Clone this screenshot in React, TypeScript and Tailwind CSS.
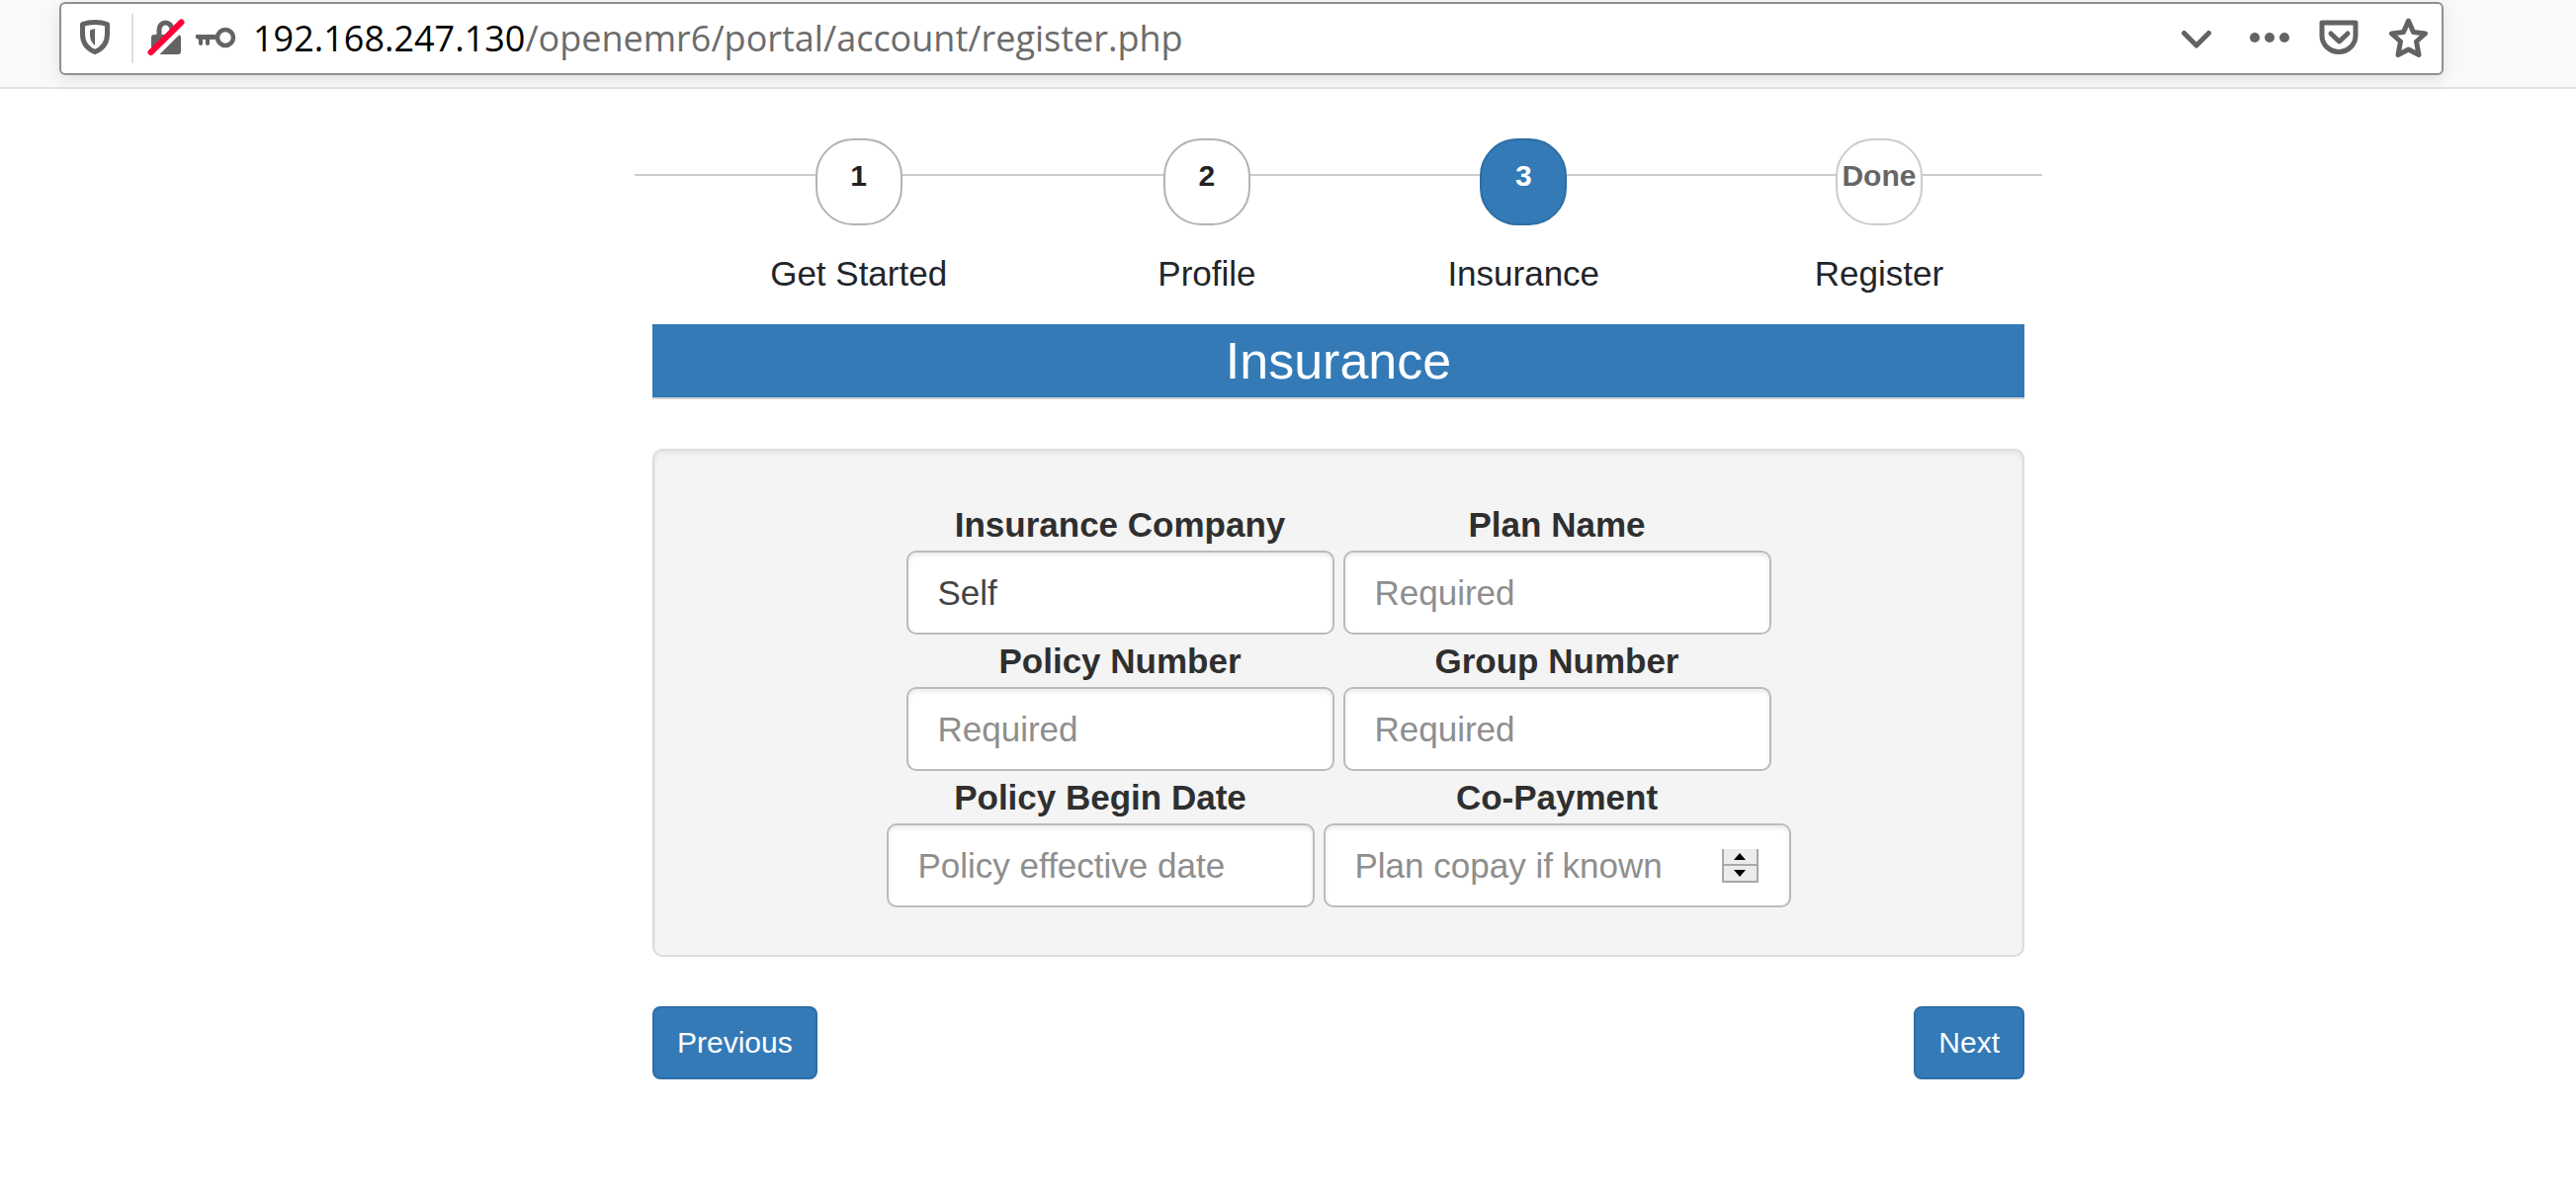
import React from "react";

type Step = { mark: string; title: string; state: "idle" | "active" | "disabled" };

const steps: Step[] = [
  { mark: "1", title: "Get Started", state: "idle" },
  { mark: "2", title: "Profile", state: "idle" },
  { mark: "3", title: "Insurance", state: "active" },
  { mark: "Done", title: "Register", state: "disabled" },
];

const stepStyles = {
  idle: "border-[#b3b3b3] bg-white text-[#222]",
  active: "border-[#2e6da4] bg-[#337ab7] text-white",
  disabled: "border-[#ccc] bg-white text-[#666]",
};

function AddressBar() {
  return (
    <header className="border-b-2 border-[#e1e1e2] bg-[#f9f9fa] pt-[2px] pr-[134px] pb-3 pl-[60px]">
      <div className="flex h-[74px] items-center rounded-md border-2 border-[#8f8f93] bg-white pr-[14px] pl-[17px] shadow-[0_4px_16px_rgba(0,0,0,0.1)]">
        <button aria-label="Tracking protection" className="shrink-0">
          <svg width="34" height="40" viewBox="0 0 34 40" fill="none">
            <path d="M17 3.500C12 3.500 8 4.200 4.500 5.500v10c0 9 4 14.500 12.500 18 8.500-3.500 12.500-9 12.500-18v-10C26 4.200 22 3.500 17 3.500z" stroke="#636363" strokeWidth="5" strokeLinejoin="round" />
            <path d="M17 10v17c-3-2.500-5-6-5-10.500v-5z" fill="#636363" />
          </svg>
        </button>
        <span className="mr-[14px] ml-5 h-[50px] w-[2px] shrink-0 bg-[#dedee0]" />
        <button aria-label="Connection is not secure" className="shrink-0">
          <svg width="38" height="42" viewBox="0 0 38 42" fill="none">
            <path d="M12 20v-8a6.500 7 0 0 1 13 0v8" stroke="#636363" strokeWidth="5" />
            <rect x="4" y="17" width="30" height="20" rx="3" fill="#636363" />
            <path d="M6 40L37 9" stroke="#fff" strokeWidth="5" />
            <path d="M3.500 35L34.500 4.500" stroke="#ff0039" strokeWidth="6" strokeLinecap="round" />
          </svg>
        </button>
        <button aria-label="Saved login" className="ml-[11px] shrink-0">
          <svg width="42" height="26" viewBox="0 0 42 26" fill="none">
            <circle cx="30" cy="12" r="8" stroke="#636363" strokeWidth="4.500" />
            <path d="M22 9H2a2 2 0 0 0-1 4l2 1v4a1.500 1.500 0 0 0 4 0v-4h3v4a1.500 1.500 0 0 0 4 0v-4h8z" fill="#636363" />
          </svg>
        </button>
        <p className="ml-4 flex-1 font-['Open_Sans',sans-serif] text-[36px] leading-[48px] whitespace-nowrap text-[#6b6b6b]">
          <span className="text-black">192.168.247.130</span>/openemr6/portal/account/register.php
        </p>
        <div className="flex items-center gap-[38px]">
          <button aria-label="Show history">
            <svg width="32" height="40" viewBox="0 0 32 40" fill="none">
              <path d="M3.500 14.500L16 27l12.500-12.500" stroke="#636363" strokeWidth="5" strokeLinecap="round" strokeLinejoin="round" />
            </svg>
          </button>
          <button aria-label="Page actions">
            <svg width="40" height="40" viewBox="0 0 40 40" fill="#636363">
              <circle cx="5" cy="19" r="5" />
              <circle cx="20" cy="19" r="5" />
              <circle cx="35" cy="19" r="5" />
            </svg>
          </button>
          <button aria-label="Save to Pocket" className="-ml-2">
            <svg width="40" height="40" viewBox="0 0 40 40" fill="none" stroke="#636363" strokeWidth="5" strokeLinecap="round" strokeLinejoin="round">
              <path d="M3 4h34v13a17 16.500 0 0 1-34 0z" />
              <path d="M12 15l8.500 8 8.500-8" />
            </svg>
          </button>
          <button aria-label="Bookmark this page" className="-ml-2">
            <svg width="40" height="42" viewBox="0 0 40 42" fill="none">
              <path d="M20.500 3l5 11.500 12 1.500-9 8 2.500 13.500-10.500-5.500-10.500 5.500L12.500 24l-9-8 12-1.500z" stroke="#636363" strokeWidth="5" strokeLinejoin="round" />
            </svg>
          </button>
        </div>
      </div>
    </header>
  );
}

function StepWizard() {
  return (
    <nav aria-label="Registration steps" className="relative -mx-[18px]">
      <div className="absolute inset-x-0 top-9 h-[2px] bg-[#ccc]" />
      <ol className="relative table w-full">
        {steps.map((step) => (
          <li key={step.title} className="table-cell text-center">
            <button
              disabled={step.state === "disabled"}
              aria-current={step.state === "active" ? "step" : undefined}
              className={`mx-auto flex size-[88px] justify-center rounded-[38px] border-2 pt-[14px] text-[30px] leading-[43px] font-bold ${stepStyles[step.state]}`}
            >
              {step.mark}
            </button>
            <p className="mt-6 text-[35px] leading-[50px] text-[#212529]">{step.title}</p>
          </li>
        ))}
      </ol>
    </nav>
  );
}

type FieldProps = {
  id: string;
  label: string;
  placeholder?: string;
  defaultValue?: string;
};

const fieldStyle =
  "block h-[85px] rounded-[10px] border-2 border-[#bbb] bg-white px-[30px] text-[35px] text-[#444] shadow-[inset_0_3px_4px_rgba(0,0,0,0.08)] outline-none placeholder:text-[#8e8e8e] placeholder:opacity-100";
const labelStyle = "block pb-[1px] text-center text-[35px] leading-[50px] font-bold text-[#2f2f2f]";

function Field({ id, label, placeholder, defaultValue }: FieldProps) {
  return (
    <div>
      <label htmlFor={id} className={labelStyle}>{label}</label>
      <input id={id} type="text" placeholder={placeholder} defaultValue={defaultValue} className={`${fieldStyle} w-[433px]`} />
    </div>
  );
}

function CopayField() {
  return (
    <div>
      <label htmlFor="copay" className={labelStyle}>Co-Payment</label>
      <div className="relative">
        <input
          id="copay"
          type="number"
          placeholder="Plan copay if known"
          className={`${fieldStyle} w-[473px] [appearance:textfield] [&::-webkit-inner-spin-button]:appearance-none`}
        />
        <div className="absolute inset-y-0 right-[33px] flex flex-col justify-center">
          <button aria-label="Increase" className="flex h-[17px] w-[37px] items-center justify-center border-x-2 border-b-2 border-[#a8a8a8] bg-[#ececec]">
            <svg width="12" height="7" viewBox="0 0 12 7"><path d="M6 0l6 7H0z" /></svg>
          </button>
          <button aria-label="Decrease" className="flex h-[17px] w-[37px] items-center justify-center border-x-2 border-b-2 border-[#a8a8a8] bg-[#ececec]">
            <svg width="12" height="7" viewBox="0 0 12 7"><path d="M0 0h12L6 7z" /></svg>
          </button>
        </div>
      </div>
    </div>
  );
}

const buttonStyle =
  "rounded-lg border-2 border-[#2e6da4] bg-[#337ab7] px-[23px] py-[13px] text-[30px] leading-[44px] text-white";

export default function App() {
  return (
    <div className="min-h-screen bg-white font-['Liberation_Sans',Arial,sans-serif]">
      <AddressBar />
      <main className="pt-[50px] pl-[102px]">
        <div className="mx-auto max-w-[1388px]">
          <StepWizard />
          <form onSubmit={(e) => e.preventDefault()}>
            <h1 className="mt-[26px] border-b-2 border-[#d5d5d5] bg-[#337ab7] text-center text-[52px] leading-[74px] text-white">Insurance</h1>
            <div className="mt-[50px] flex flex-col gap-[2px] rounded-[10px] border-2 border-[#dcdcdc] bg-[#f4f4f4] pt-[50px] pb-12 shadow-[inset_0_3px_4px_rgba(0,0,0,0.06)]">
              <div className="flex justify-center gap-[9px]">
                <Field id="company" label="Insurance Company" defaultValue="Self" />
                <Field id="plan" label="Plan Name" placeholder="Required" />
              </div>
              <div className="flex justify-center gap-[9px]">
                <Field id="policy" label="Policy Number" placeholder="Required" />
                <Field id="group" label="Group Number" placeholder="Required" />
              </div>
              <div className="flex justify-center gap-[9px]">
                <Field id="begin" label="Policy Begin Date" placeholder="Policy effective date" />
                <CopayField />
              </div>
            </div>
            <div className="mt-[50px] flex justify-between">
              <button type="button" className={buttonStyle}>Previous</button>
              <button type="button" className={buttonStyle}>Next</button>
            </div>
          </form>
        </div>
      </main>
    </div>
  );
}
